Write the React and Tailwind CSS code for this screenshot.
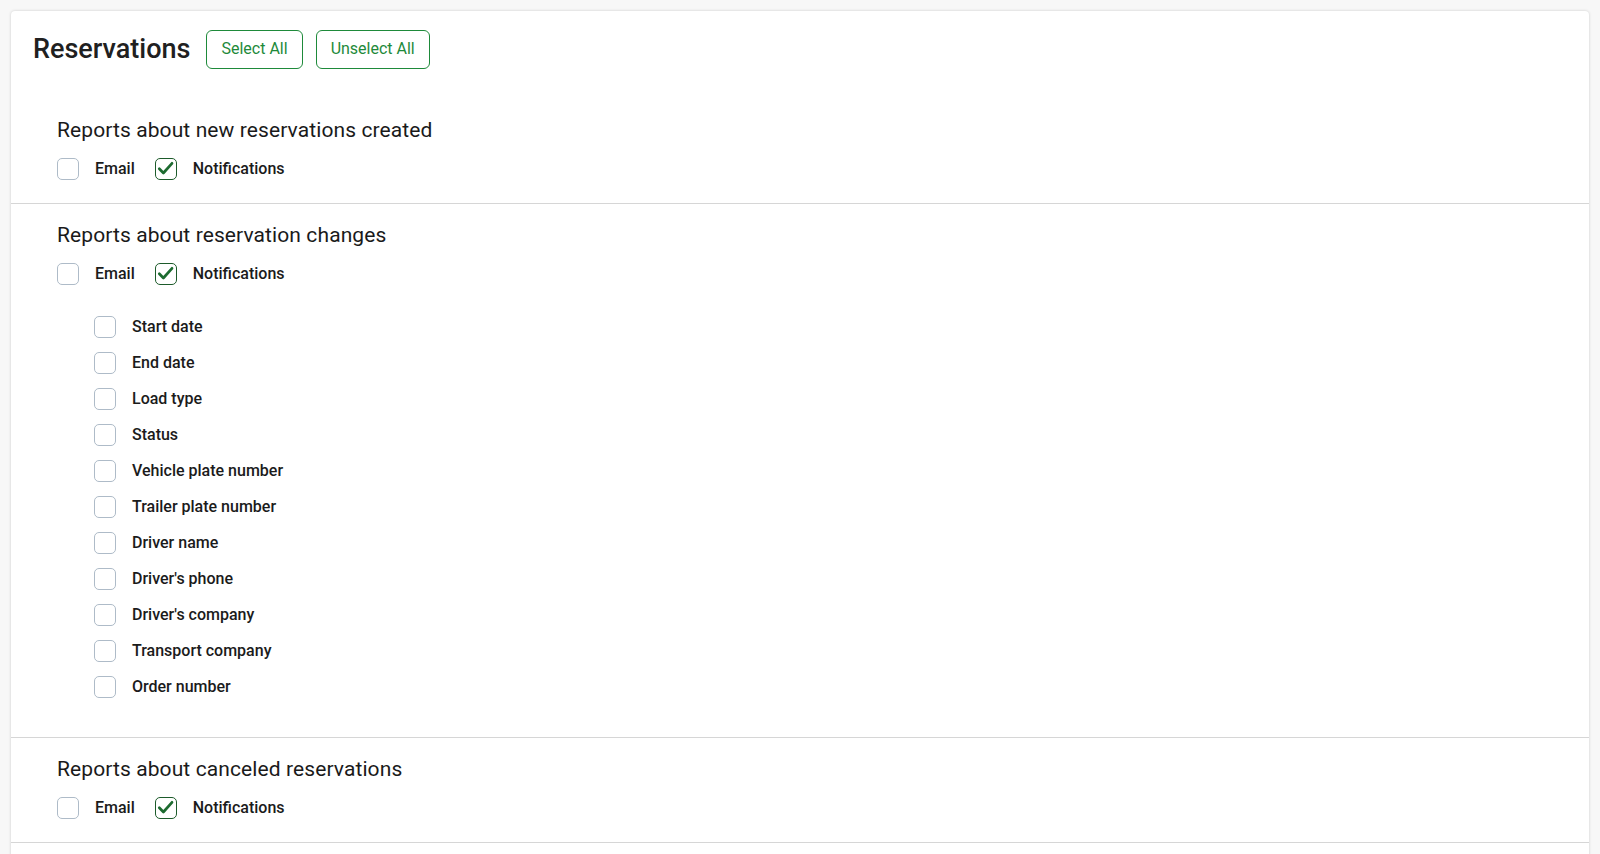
import React, { useState } from 'react';

const changeFields = [
  'Start date',
  'End date',
  'Load type',
  'Status',
  'Vehicle plate number',
  'Trailer plate number',
  'Driver name',
  "Driver's phone",
  "Driver's company",
  'Transport company',
  'Order number',
];

function Checkbox({ checked, onChange, label }) {
  return (
    <label className="flex h-[22px] items-center gap-4 cursor-pointer select-none">
      <span
        onClick={onChange}
        className={`flex h-[22px] w-[22px] items-center justify-center rounded-[5px] border-[1.5px] bg-white ${
          checked ? 'border-[#1d5b2b]' : 'border-[#aebbc8]'
        }`}
      >
        {checked && (
          <svg width="19" height="19" viewBox="0 0 19 19" fill="none">
            <path d="M3.3 9.8 L7.4 14 L16 4.3" stroke="#1d6b30" strokeWidth="2.7" strokeLinecap="round" strokeLinejoin="round" />
          </svg>
        )}
      </span>
      <span className="text-[16px] leading-[22px] font-medium text-[#1b1b1b]">{label}</span>
    </label>
  );
}

function ChannelRow({ value, setValue }) {
  return (
    <div className="mt-[14px] flex items-center gap-5">
      <Checkbox checked={value.email} onChange={() => setValue({ ...value, email: !value.email })} label="Email" />
      <Checkbox checked={value.notif} onChange={() => setValue({ ...value, notif: !value.notif })} label="Notifications" />
    </div>
  );
}

export default function App() {
  const [created, setCreated] = useState({ email: false, notif: true });
  const [changes, setChanges] = useState({ email: false, notif: true });
  const [canceled, setCanceled] = useState({ email: false, notif: true });
  const [fields, setFields] = useState(changeFields.map(() => false));

  const setAll = (v) => {
    setCreated({ email: v, notif: v });
    setChanges({ email: v, notif: v });
    setCanceled({ email: v, notif: v });
    setFields(changeFields.map(() => v));
  };

  return (
    <div className="min-h-screen bg-[#f7f7f7] p-[11px]" style={{ fontFamily: 'Roboto, "Noto Sans", sans-serif' }}>
      <div className="rounded-[4px] bg-white pb-[120px] shadow-[0_0_3px_rgba(0,0,0,0.18)]">
        {/* Header */}
        <div className="flex items-center gap-[13px] pl-[22px] pt-[18px]">
          <h1 className="mr-[3px] text-[27px] font-medium text-[#202020]">Reservations</h1>
          <button
            onClick={() => setAll(true)}
            className="h-[39px] rounded-[6px] border border-[#1e8a3a] px-[14px] text-[16px] text-[#1e8a3a]"
          >
            Select All
          </button>
          <button
            onClick={() => setAll(false)}
            className="h-[39px] rounded-[6px] border border-[#1e8a3a] px-[14px] text-[16px] text-[#1e8a3a]"
          >
            Unselect All
          </button>
        </div>

        {/* New reservations */}
        <div className="mt-[28px] border-b border-[#d6d6d6] px-[46px] pb-[23px] pt-[18px]">
          <h2 className="text-[21px] leading-[28px] tracking-[0.1px] text-[#1a1a1a]">Reports about new reservations created</h2>
          <ChannelRow value={created} setValue={setCreated} />
        </div>

        {/* Changes */}
        <div className="border-b border-[#d6d6d6] px-[46px] pb-[39px] pt-[17px]">
          <h2 className="text-[21px] leading-[28px] tracking-[0.1px] text-[#1a1a1a]">Reports about reservation changes</h2>
          <ChannelRow value={changes} setValue={setChanges} />
          <div className="mt-[31px] flex flex-col gap-[14px] pl-[37px]">
            {changeFields.map((f, i) => (
              <Checkbox
                key={f}
                label={f}
                checked={fields[i]}
                onChange={() => setFields(fields.map((x, j) => (j === i ? !x : x)))}
              />
            ))}
          </div>
        </div>

        {/* Canceled */}
        <div className="border-b border-[#d6d6d6] px-[46px] pb-[23px] pt-[17px]">
          <h2 className="text-[21px] leading-[28px] tracking-[0.1px] text-[#1a1a1a]">Reports about canceled reservations</h2>
          <ChannelRow value={canceled} setValue={setCanceled} />
        </div>
      </div>
    </div>
  );
}
